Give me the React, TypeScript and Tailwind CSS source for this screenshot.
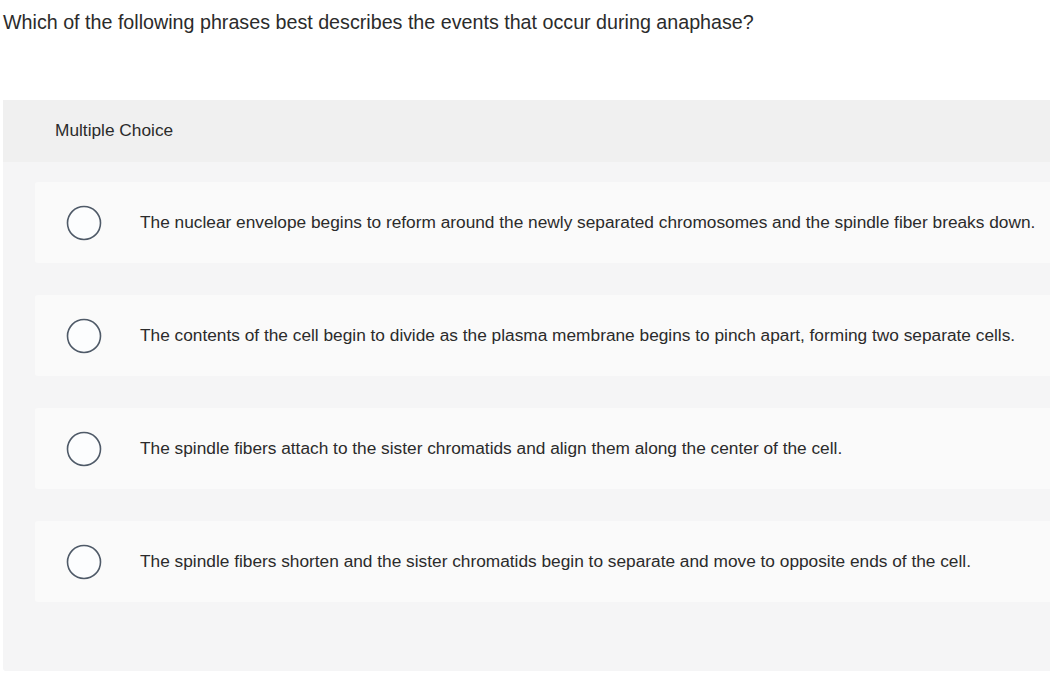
const options = [
  "The nuclear envelope begins to reform around the newly separated chromosomes and the spindle fiber breaks down.",
  "The contents of the cell begin to divide as the plasma membrane begins to pinch apart, forming two separate cells.",
  "The spindle fibers attach to the sister chromatids and align them along the center of the cell.",
  "The spindle fibers shorten and the sister chromatids begin to separate and move to opposite ends of the cell.",
];

function Radio() {
  return (
    <svg width="36" height="36" viewBox="0 0 36 36" className="shrink-0">
      <circle cx="18" cy="18" r="16.5" fill="#fcfdfe" stroke="#4f5a68" strokeWidth="1.6" />
    </svg>
  );
}

export default function App() {
  return (
    <div className="w-[1050px] h-[673px] bg-white overflow-hidden text-[#2b2b2b] font-['Liberation_Sans',Arial,sans-serif]">
      <div className="pl-[3px] pt-[10px] h-[100px] text-[19.7px] leading-[24px]">
        Which of the following phrases best describes the events that occur during anaphase?
      </div>
      <div className="ml-[3px] h-[571px] bg-[#f5f5f6] rounded-bl-[3px]">
        <div className="h-[62px] bg-[#f0f0f0] pl-[52px] flex items-center text-[17.3px]">
          Multiple Choice
        </div>
        <div className="pt-[20px] pl-[32px] flex flex-col gap-[32px]">
          {options.map((o) => (
            <div key={o} className="h-[81px] bg-[#fafafa] rounded-l-[3px] flex items-center pl-[31px]">
              <Radio />
              <span className="ml-[38px] text-[17.3px] whitespace-nowrap">{o}</span>
            </div>
          ))}
        </div>
      </div>
    </div>
  );
}
